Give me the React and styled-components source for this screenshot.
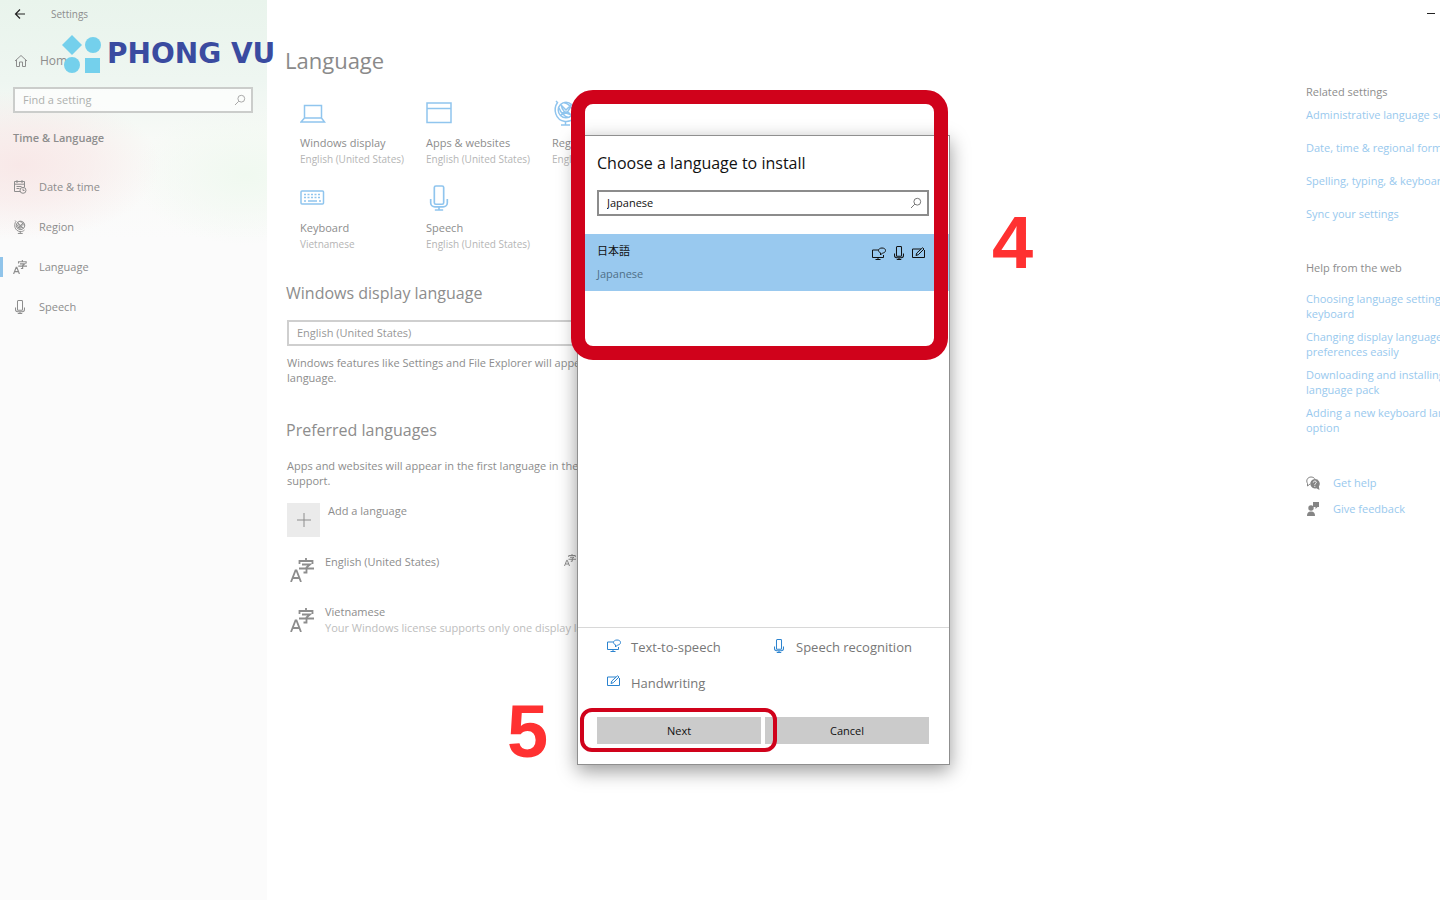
import React from "react";
import styled, { createGlobalStyle } from "styled-components";

const Global = createGlobalStyle`
  * { box-sizing: border-box; }
  body { margin: 0; background: #fff; }
  body, button, input, select {
    font-family: "Open Sans", "Noto Sans CJK JP", sans-serif;
    font-size: 11px;
    line-height: 16px;
  }
  h1, h2, h3, p, ul { margin: 0; padding: 0; font-size: 11px; font-weight: 400; }
  ul { list-style: none; }
  a { text-decoration: none; color: inherit; }
  svg { display: block; flex: none; }
`;

const Page = styled.div`
  position: relative;
  min-height: 100vh;
  display: grid;
  grid-template-columns: 267px minmax(0, 1fr) 134px;
  overflow: hidden;
  color: #8d8d8d;
`;

/* Sidebar */
const Sidebar = styled.aside`
  background:
    radial-gradient(ellipse 140px 75px at 20px 165px, #f8e4e4d0 0%, #f8e4e480 50%, #f8e4e400 100%),
    radial-gradient(ellipse 110px 70px at 245px 175px, #f0f9f0 0%, #f0f9f000 100%),
    linear-gradient(180deg, #e9f4ec 0, #eef6f1 80px, #f8faf7 140px, #fbfbfb 240px, #fbfbfb 100%);
`;
const TitleBar = styled.div`
  display: flex;
  align-items: center;
  gap: 25px;
  height: 28px;
  padding-left: 14px;
  font-size: 10px;
`;
const IconButton = styled.button`
  border: 0;
  padding: 0;
  background: none;
  color: #222;
`;
const HomeLink = styled.a`
  display: flex;
  align-items: center;
  gap: 12px;
  height: 20px;
  margin: 23px 0 16px 14px;
  font-size: 12px;
`;
const SearchBox = styled.label`
  display: flex;
  align-items: center;
  height: 26px;
  margin: ${(p) => p.$margin};
  padding: 0 5px 0 8px;
  border: 2px solid ${(p) => (p.$strong ? "#8c8c8c" : "#cbcdcb")};
  background: #ffffffb0;
  color: ${(p) => (p.$strong ? "#777" : "#aaa")};
`;
const SearchInput = styled.input`
  flex: 1;
  min-width: 0;
  border: 0;
  outline: 0;
  padding: 0;
  background: none;
  color: #111;
  &::placeholder { color: #aeb0ae; opacity: 1; }
`;
const SideHeading = styled.h2`
  margin: 17px 0 31px 13px;
  font-weight: 600;
  line-height: 16px;
`;
const NavLink = styled.a`
  display: flex;
  align-items: center;
  gap: 12px;
  height: 20px;
  margin-bottom: 20px;
  padding-left: ${(p) => (p.$active ? 10 : 13)}px;
  border-left: ${(p) => (p.$active ? "3px solid #90c4ea" : "0")};
`;

/* Main column */
const Main = styled.main`
  padding: 45px 0 0 19px;
`;
const PageTitle = styled.h1`
  margin-left: -1px;
  font-size: 22px;
  line-height: 30px;
  color: #8a8a8a;
`;
const Tiles = styled.div`
  display: grid;
  grid-template-columns: repeat(3, 126px);
  grid-auto-rows: 85px;
  margin: 25px 0 0 14px;
`;
const Tile = styled.a`
  display: flex;
  flex-direction: column;
  white-space: nowrap;
  & > svg { margin-bottom: 9px; color: #90c5ee; }
`;
const Small = styled.small`
  font-size: 10px;
  line-height: 16px;
  color: #b5b5b5;
`;
const SectionTitle = styled.h2`
  margin-top: ${(p) => p.$top}px;
  font-size: 16px;
  line-height: 24px;
`;
const Select = styled.select`
  display: block;
  appearance: none;
  width: 390px;
  height: 26px;
  margin: 15px 0 9px 1px;
  padding: 0 8px;
  border: 2px solid #cfcfcf;
  background: #fff;
  color: #989898;
`;
const Text = styled.p`
  width: 390px;
  margin: ${(p) => p.$top || 0}px 0 0 1px;
  line-height: 15px;
`;
const AddButton = styled.button`
  display: flex;
  align-items: flex-start;
  gap: 8px;
  margin: 15px 0 17px 1px;
  border: 0;
  padding: 0;
  background: none;
  color: #8d8d8d;
`;
const AddSquare = styled.span`
  display: grid;
  place-items: center;
  width: 33px;
  height: 34px;
  background: #ebebeb;
`;
const LanguageRow = styled.div`
  display: grid;
  grid-template-columns: 24px 228px 12px;
  gap: 11px;
  height: 50px;
  padding: 0 0 0 4px;
  white-space: nowrap;
  & > svg { margin-top: 4px; }
  & > svg:last-child { margin-top: 0; }
`;
const Note = styled.p`
  color: #bdbdbd;
`;

/* Right column */
const Related = styled.aside`
  padding-top: 84px;
  white-space: nowrap;
`;
const LinkList = styled.ul`
  display: flex;
  flex-direction: column;
  gap: ${(p) => p.$gap}px;
  margin: ${(p) => p.$margin};
  line-height: 15px;
  color: #99c9ee;
`;
const IconLink = styled.a`
  display: flex;
  align-items: center;
  gap: 13px;
  line-height: 16px;
  & > svg { color: #858585; }
`;
const Minimise = styled.div`
  position: absolute;
  top: 2px;
  right: 5px;
`;

/* Overlays */
const Brand = styled.div`
  position: absolute;
  top: 34px;
  left: 62px;
  display: flex;
  align-items: center;
  gap: 5px;
  color: #3a4ba0;
  font: 700 28px/40px "DejaVu Sans", sans-serif;
  white-space: nowrap;
`;
const Dialog = styled.section`
  position: absolute;
  top: 135px;
  left: 577px;
  display: flex;
  flex-direction: column;
  width: 373px;
  height: 630px;
  border: 1px solid #8f8f8f;
  background: #fff;
  box-shadow: 0 6px 18px #0006;
  color: #111;
`;
const DialogTitle = styled.h2`
  margin: 15px 19px 0;
  font-size: 16px;
  line-height: 24px;
`;
const Result = styled.button`
  display: flex;
  justify-content: space-between;
  height: 57px;
  padding: 9px 23px 0 19px;
  border: 0;
  background: #99c9ef;
  color: #111;
  text-align: left;
`;
const ResultName = styled.span`
  display: flex;
  flex-direction: column;
  gap: 7px;
`;
const Muted = styled.span`
  color: #4f6f88;
`;
const Features = styled.span`
  display: flex;
  align-items: center;
  gap: 6px;
  height: 20px;
`;
const Legend = styled.ul`
  display: grid;
  grid-template-columns: 165px 1fr;
  gap: 16px 0;
  margin-top: auto;
  padding: 9px 29px 24px;
  border-top: 1px solid #d8d8d8;
  font-size: 13px;
  line-height: 20px;
  color: #777;
`;
const LegendItem = styled.li`
  display: flex;
  gap: 10px;
  white-space: nowrap;
  & > svg { margin-top: 2px; color: #2b83cf; }
`;
const Actions = styled.div`
  display: grid;
  grid-template-columns: 1fr 1fr;
  gap: 4px;
  padding: 0 20px 20px 19px;
`;
const Action = styled.button`
  height: 27px;
  border: 0;
  background: #cbcbcb;
  color: #111;
`;
const Mark = styled.div`
  position: absolute;
  top: ${(p) => p.$top}px;
  left: ${(p) => p.$left}px;
  width: ${(p) => p.$width}px;
  height: ${(p) => p.$height}px;
  border: ${(p) => p.$line}px solid #d0021b;
  border-radius: ${(p) => p.$radius}px;
  pointer-events: none;
`;
const Step = styled.strong`
  position: absolute;
  top: ${(p) => p.$top}px;
  left: ${(p) => p.$left}px;
  color: #ff3131;
  font: 700 74px/80px "Liberation Sans", Arial, sans-serif;
`;

/* Icons */
const Svg = ({ w = 14, h = w, box, children, sw = 1, ...rest }) => (
  <svg width={w} height={h} viewBox={box || `0 0 ${w} ${h}`} fill="none" stroke="currentColor" strokeWidth={sw} aria-hidden="true" {...rest}>{children}</svg>
);
const Back = () => <Svg w={12} h={12} sw={1.2}><path d="M11 6H1.5M6 1.5 1.5 6 6 10.5" /></Svg>;
const HomeIcon = () => <Svg w={14}><path d="M1 7 7 1.5 13 7M2.5 6v6.5h3V8h3v4.5h3V6" /></Svg>;
const SearchIcon = () => <Svg w={12}><circle cx="7.3" cy="4.7" r="3.4" /><path d="M4.8 7.2 1 11" /></Svg>;
const Calendar = () => <Svg w={14}><path d="M7 11.5H1.5v-10h10V7M1.5 4.2h10M4 0v3M9 0v3M3.5 6.5h5M3.5 8.5h3" /><circle cx="10" cy="10.3" r="3" /><path d="M10 8.5v2h1.5" /></Svg>;
const Globe = ({ size = 14 }) => (
  <Svg w={size} box="0 0 26 26" sw={size > 20 ? 1.5 : 1.8}>
    <circle cx="14" cy="10" r="7.8" />
    <path d="M8.5 4.5 19.5 15.5M19.5 4.5 8.5 15.5M9 4.500c1 6 4 9.500 10.500 10.500M8.500 15c6-1 9.500-4.500 10.500-10.500M7 8c2 5 5 8 9 9.500M12 2.500c5 1.500 8 4.500 9.500 9" />
    <path d="M4 1 5.500 2.500C1 9 3 20 13 21.5c3.500.5 6.500-1 8.500-3M13.500 21.500V25M9 25h9" />
  </Svg>
);
const LangIcon = ({ size = 14 }) => (
  <Svg w={size} box="0 0 24 24" sw={size > 20 ? 1.8 : 2}>
    <path d="M1 24 5.500 12.500h1L11 24M3 20h6" />
    <path d="M16 0v3M9.500 6V3H22.500v3M12 6.500h8L16.500 9.500V14.500h-3M9 10.500H24" />
  </Svg>
);
const Mic = ({ w = 14, h = 14 }) => (
  <Svg w={w} h={h} box="0 0 18 25" sw={w > 15 ? 1.6 : 1.8}><rect x="4.500" y="1" width="9" height="17.500" rx="1.500" /><path d="M1 13.500v3.500a4 4 0 0 0 4 4h8a4 4 0 0 0 4-4v-3.500M9 21v3M5 24h8" /></Svg>
);
const Laptop = () => <Svg w={26} sw={1.5}><path d="M4.500 18V5.500h17V18M4.500 18h17l3 4H1z" /></Svg>;
const WindowIcon = () => <Svg w={26} sw={1.5}><path d="M1 3h24v19.500H1zM1 8.500h24" /></Svg>;
const Keyboard = () => <Svg w={26} sw={1.500}><rect x="1" y="6" width="22.500" height="13" rx="1" /><path strokeDasharray="2 1.500" d="M4 9.500h17M4 12.500h17" /><path d="M4 16h2M8 16h9M19 16h2" /></Svg>;
const Plus = () => <Svg w={14}><path d="M7 0v14M0 7h14" /></Svg>;
const Tts = () => <Svg w={14} h={13}><path d="M6.500 3H.5v7.500h11V8M6 10.500v2M3.500 12.500h5" /><path d="M10 1c2.200 0 3.500 1 3.500 2.500S12.200 6 10.500 6L8.500 8V5.800C7.200 5.300 6.500 4.500 6.500 3.500 6.500 2 8 1 10 1z" /></Svg>;
const Pen = () => <Svg w={14} h={12}><path d="M9 2H.5v8.500h12V3M4 8.500l.8-2.500L10.500.8 12 2 6.300 7.700z" /></Svg>;
const HelpIcon = () => <Svg w={14}><path d="M4 8 1.500 10V7.500C-.5 4 2 1 5 1c1.500 0 3 .6 3.800 1.700" /><path fill="currentColor" stroke="none" d="M8.800 3a4.700 4.700 0 1 0 1.500 9.200L13.500 14l-.6-3.600A4.700 4.700 0 0 0 8.800 3z" /><path stroke="#fff" d="M7.300 6.500c.2-2 3.200-1.700 3 0-.1 1-1.500 1-1.500 2.300M8.800 9.800v1" /></Svg>;
const Feedback = () => <Svg w={14}><g fill="currentColor" stroke="none"><circle cx="5" cy="6" r="2.700" /><path d="M1 14c0-3 1-4.500 4-4.500S9 11 9 14zM7 0h6v5h-1.500L9.500 7V5H7z" /></g></Svg>;

const nav = [
  ["Date & time", <Calendar />],
  ["Region", <Globe />],
  ["Language", <LangIcon />],
  ["Speech", <Mic />],
];
const tiles = [
  ["Windows display", "English (United States)", <Laptop />],
  ["Apps & websites", "English (United States)", <WindowIcon />],
  ["Regional format", "English (United States)", <Globe size={26} />],
  ["Keyboard", "Vietnamese", <Keyboard />],
  ["Speech", "English (United States)", <Mic w={26} h={26} />],
];
const related = ["Administrative language settings", "Date, time & regional formatting", "Spelling, typing, & keyboard settings", "Sync your settings"];
const help = [
  ["Choosing language settings for", "keyboard"],
  ["Changing display language", "preferences easily"],
  ["Downloading and installing", "language pack"],
  ["Adding a new keyboard language", "option"],
];

export default function App() {
  return (
    <Page>
      <Global />
      <Sidebar>
        <TitleBar><IconButton aria-label="Back"><Back /></IconButton><span>Settings</span></TitleBar>
        <HomeLink href="#home"><HomeIcon />Home</HomeLink>
        <SearchBox $margin="0 14px 0 13px">
          <SearchInput placeholder="Find a setting" aria-label="Find a setting" />
          <SearchIcon />
        </SearchBox>
        <SideHeading>Time &amp; Language</SideHeading>
        <nav>
          {nav.map(([name, icon]) => (
            <NavLink key={name} href="#nav" $active={name === "Language"}>{icon}{name}</NavLink>
          ))}
        </nav>
      </Sidebar>

      <Main>
        <PageTitle>Language</PageTitle>
        <Tiles>
          {tiles.map(([name, value, icon]) => (
            <Tile key={name} href="#tile">{icon}<span>{name}</span><Small>{value}</Small></Tile>
          ))}
        </Tiles>
        <SectionTitle $top={11}>Windows display language</SectionTitle>
        <Select aria-label="Windows display language"><option>English (United States)</option></Select>
        <Text>Windows features like Settings and File Explorer will appear in this language.</Text>
        <SectionTitle $top={33}>Preferred languages</SectionTitle>
        <Text $top={16}>Apps and websites will appear in the first language in the list that they support.</Text>
        <AddButton><AddSquare><Plus /></AddSquare>Add a language</AddButton>
        <LanguageRow><LangIcon size={24} /><span>English (United States)</span><LangIcon size={12} /></LanguageRow>
        <LanguageRow>
          <LangIcon size={24} />
          <div>Vietnamese<Note>Your Windows license supports only one display language</Note></div>
        </LanguageRow>
      </Main>

      <Related>
        <h3>Related settings</h3>
        <LinkList $gap={18} $margin="7px 0 39px">
          {related.map((t) => <li key={t}><a href="#related">{t}</a></li>)}
        </LinkList>
        <h3>Help from the web</h3>
        <LinkList $gap={8} $margin="15px 0 40px">
          {help.map(([a, b]) => <li key={a}><a href="#help">{a}<br />{b}</a></li>)}
        </LinkList>
        <LinkList $gap={10} $margin="0">
          <li><IconLink href="#gethelp"><HelpIcon />Get help</IconLink></li>
          <li><IconLink href="#feedback"><Feedback />Give feedback</IconLink></li>
        </LinkList>
      </Related>

      <Minimise><IconButton aria-label="Minimise"><Svg w={8} h={10}><path d="M0 9.500h8" /></Svg></IconButton></Minimise>

      <Brand>
        <svg width="40" height="40" viewBox="0 0 40 40" fill="#74d0ec" aria-hidden="true">
          <path d="M10 1 20 11 10 21 0 11z" /><circle cx="31" cy="11" r="8" /><circle cx="10" cy="31" r="8" /><path d="M23 24h15v15H23z" />
        </svg>
        PHONG VU
      </Brand>

      <Dialog role="dialog" aria-label="Choose a language to install">
        <DialogTitle>Choose a language to install</DialogTitle>
        <SearchBox $strong $margin="15px 20px 18px 19px">
          <SearchInput defaultValue="Japanese" aria-label="Search languages" />
          <SearchIcon />
        </SearchBox>
        <Result>
          <ResultName>日本語<Muted>Japanese</Muted></ResultName>
          <Features><Tts /><Mic /><Pen /></Features>
        </Result>
        <Legend>
          <LegendItem><Tts />Text-to-speech</LegendItem>
          <LegendItem><Mic />Speech recognition</LegendItem>
          <LegendItem><Pen />Handwriting</LegendItem>
        </Legend>
        <Actions><Action>Next</Action><Action>Cancel</Action></Actions>
      </Dialog>

      <Mark $top={90} $left={571} $width={377} $height={270} $line={14} $radius={22} />
      <Mark $top={708} $left={580} $width={197} $height={44} $line={4} $radius={12} />
      <Step $top={203} $left={992}>4</Step>
      <Step $top={692} $left={507}>5</Step>
    </Page>
  );
}
